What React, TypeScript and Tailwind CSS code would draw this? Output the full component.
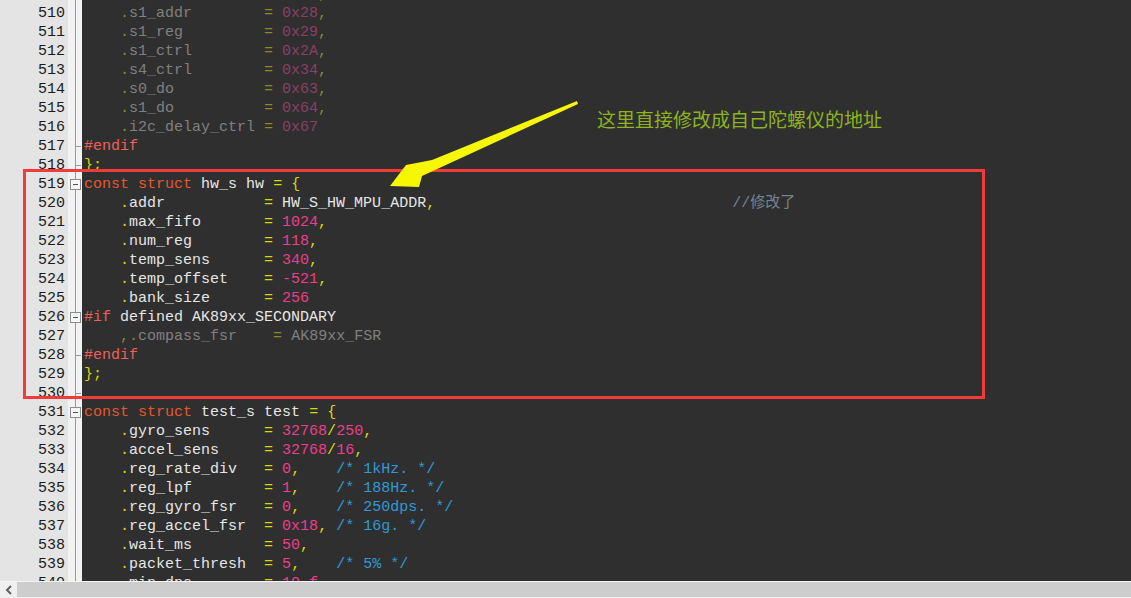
import React from "react"

/* ----------------------------------------------------------------
 * Data
 * ---------------------------------------------------------------- */

type Line = { n: number; text: string; dim?: boolean; fold?: "box" | "end" }

const lines: Line[] = [
  { n: 509, text: "    .s1_bank        = 0x27,", dim: true },
  { n: 510, text: "    .s1_addr        = 0x28,", dim: true },
  { n: 511, text: "    .s1_reg         = 0x29,", dim: true },
  { n: 512, text: "    .s1_ctrl        = 0x2A,", dim: true },
  { n: 513, text: "    .s4_ctrl        = 0x34,", dim: true },
  { n: 514, text: "    .s0_do          = 0x63,", dim: true },
  { n: 515, text: "    .s1_do          = 0x64,", dim: true },
  { n: 516, text: "    .i2c_delay_ctrl = 0x67", dim: true },
  { n: 517, text: "#endif", fold: "end" },
  { n: 518, text: "};", fold: "end" },
  { n: 519, text: "const struct hw_s hw = {", fold: "box" },
  {
    n: 520,
    text:
      "    .addr           = HW_S_HW_MPU_ADDR," +
      " ".repeat(33) +
      "//修改了",
  },
  { n: 521, text: "    .max_fifo       = 1024," },
  { n: 522, text: "    .num_reg        = 118," },
  { n: 523, text: "    .temp_sens      = 340," },
  { n: 524, text: "    .temp_offset    = -521," },
  { n: 525, text: "    .bank_size      = 256" },
  { n: 526, text: "#if defined AK89xx_SECONDARY", fold: "box" },
  { n: 527, text: "    ,.compass_fsr    = AK89xx_FSR", dim: true },
  { n: 528, text: "#endif", fold: "end" },
  { n: 529, text: "};" },
  { n: 530, text: "", fold: "end" },
  { n: 531, text: "const struct test_s test = {", fold: "box" },
  { n: 532, text: "    .gyro_sens      = 32768/250," },
  { n: 533, text: "    .accel_sens     = 32768/16," },
  { n: 534, text: "    .reg_rate_div   = 0,    /* 1kHz. */" },
  { n: 535, text: "    .reg_lpf        = 1,    /* 188Hz. */" },
  { n: 536, text: "    .reg_gyro_fsr   = 0,    /* 250dps. */" },
  { n: 537, text: "    .reg_accel_fsr  = 0x18, /* 16g. */" },
  { n: 538, text: "    .wait_ms        = 50," },
  { n: 539, text: "    .packet_thresh  = 5,    /* 5% */" },
  { n: 540, text: "    .min_dps        = 10.f," },
]

const tokenRe =
  /(\/\*.*?\*\/|\/\/.*$|#\w+|\b(?:const|struct)\b|-?\b0x[0-9A-Fa-f]+\b|-?\b\d+(?:\.\w*)?|[A-Za-z_]\w*|[.=,{};/]|\s+)/g

function colorFor(tok: string, dim?: boolean) {
  if (/^\s+$/.test(tok)) return ""
  if (tok.startsWith("/*")) return "text-[#2e9ad6]"
  if (tok.startsWith("//")) return "text-[#74848f]"
  if (tok.startsWith("#")) return "text-[#ee6059]"
  if (tok === "const" || tok === "struct") return "text-[#e5582d]"
  if (/^-?\d/.test(tok)) return dim ? "text-[#8a3f66]" : "text-[#ee3d8b]"
  if (/^[.=,{};/]$/.test(tok)) return dim ? "text-[#8a8a28]" : "text-[#d9d900]"
  return dim ? "text-[#808080]" : "text-[#e6e6e6]"
}

function CodeText({ text, dim }: { text: string; dim?: boolean }) {
  const parts = text.match(tokenRe) ?? []
  return (
    <>
      {parts.map((p, i) => (
        <span key={i} className={colorFor(p, dim)}>
          {p}
        </span>
      ))}
    </>
  )
}

/* ----------------------------------------------------------------
 * Pieces
 * ---------------------------------------------------------------- */

function FoldCell({ fold }: { fold?: "box" | "end" }) {
  return (
    <div className="relative w-[14px] shrink-0 bg-[#f2f2f2]">
      <div className="absolute left-[7px] top-0 bottom-0 w-px bg-[#9a9a9a]" />
      {fold === "end" && (
        <div className="absolute left-[7px] top-[9px] w-[6px] h-px bg-[#9a9a9a]" />
      )}
      {fold === "box" && (
        <div className="absolute left-[2px] top-[4px] w-[11px] h-[11px] border border-[#8c8c8c] bg-[#f6f6f6] flex items-center justify-center">
          <div className="w-[5px] h-px bg-[#555]" />
        </div>
      )}
    </div>
  )
}

function Arrow() {
  return (
    <svg
      className="absolute left-0 top-0 pointer-events-none"
      width="1131"
      height="598"
      viewBox="0 0 1131 598"
    >
      <polygon
        points="577,101 432,160 406,165 390,186 419,187 422,176 578,104"
        fill="#f7f700"
      />
    </svg>
  )
}

/* ----------------------------------------------------------------
 * Page
 * ---------------------------------------------------------------- */

export default function App() {
  return (
    <div className="relative w-[1131px] h-[598px] overflow-hidden flex flex-col bg-[#2f2f2f] font-['Liberation_Mono','Noto_Sans_CJK_SC',monospace] text-[15px]">
      {/* Editor */}
      <div className="flex-1 min-h-0 overflow-hidden">
        <div className="-mt-[15px] flex flex-col">
          {lines.map((l) => (
            <div key={l.n} className="flex h-[19px] leading-[19px]">
              <div className="w-[68px] shrink-0 bg-[#e4e4e4] text-right pr-[3px] text-[#1b1b1b]">
                {l.n}
              </div>
              <FoldCell fold={l.fold} />
              <div className="pl-[2px] whitespace-pre">
                <CodeText text={l.text} dim={l.dim} />
              </div>
            </div>
          ))}
        </div>
      </div>

      {/* Horizontal scrollbar */}
      <div className="h-[17px] shrink-0 flex flex-col bg-[#f0f0f0]">
        <div className="h-px bg-[#f4f4f4]" />
        <div className="flex-1 flex">
          <div className="w-[17px] flex items-center justify-center bg-[#f0f0f0]">
            <svg width="8" height="10" viewBox="0 0 8 10">
              <path d="M6 1 L2 5 L6 9" fill="none" stroke="#606060" strokeWidth="2" />
            </svg>
          </div>
          <div className="flex-1 bg-[#cdcdcd]" />
        </div>
        <div className="h-px bg-[#f0f0f0]" />
      </div>

      {/* Annotation overlay */}
      <div className="absolute left-[23px] top-[169px] w-[962px] h-[230px] border-[3px] border-[#f23a3a] pointer-events-none" />
      <Arrow />
      <div className="absolute left-[597px] top-[109px] text-[19px] leading-none text-[#8db41c] font-['Microsoft_YaHei','Noto_Sans_CJK_SC',sans-serif] whitespace-nowrap">
        这里直接修改成自己陀螺仪的地址
      </div>
    </div>
  )
}
